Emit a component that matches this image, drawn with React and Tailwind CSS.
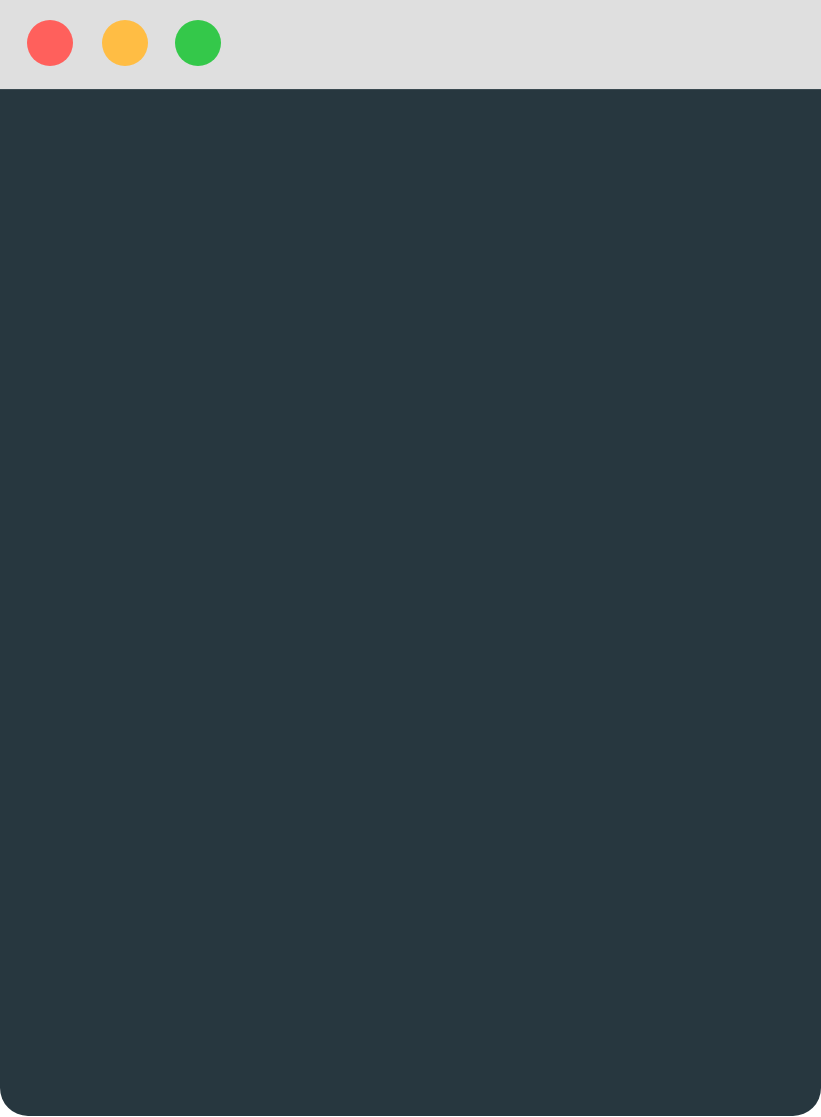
export default function App() {
  return (
    <div className="w-[821px] h-[1117px] bg-white">
      <div className="flex h-[1116px] flex-col overflow-hidden rounded-b-[28px] bg-[#27373f]">
        <div className="flex h-[89px] shrink-0 items-start bg-[#dfdfdf] pl-[27px] pt-[20px]">
          <span className="h-[46px] w-[46px] rounded-full bg-[#ff605c]" />
          <span className="ml-[29px] h-[46px] w-[46px] rounded-full bg-[#ffbd44]" />
          <span className="ml-[27px] h-[46px] w-[46px] rounded-full bg-[#34c84a]" />
        </div>
        <div className="h-px bg-[#3b4a51]" />
        <div className="flex-1" />
      </div>
    </div>
  );
}
